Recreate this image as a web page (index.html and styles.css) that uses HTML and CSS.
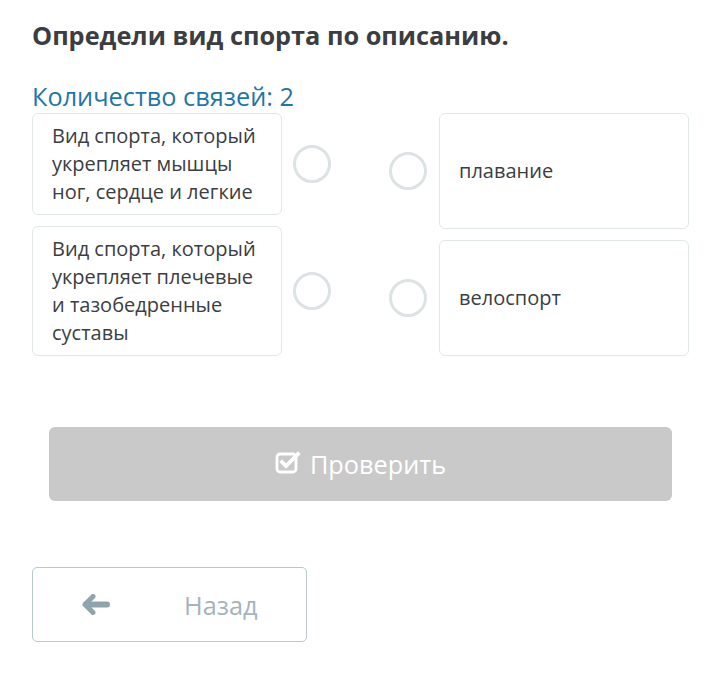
FILE: index.html
```html
<!DOCTYPE html>
<html lang="ru">
<head>
<meta charset="utf-8">
<link rel="stylesheet" href="styles.css">
</head>
<body>
<main class="page">
  <h1 class="title">Определи вид спорта по описанию.</h1>
  <div class="count">Количество связей: 2</div>
  <div class="pairs">
    <div class="col col-left">
      <div class="item">
        <div class="card">Вид спорта, который укрепляет мышцы ног, сердце и легкие</div>
        <span class="dot"></span>
      </div>
      <div class="item">
        <div class="card">Вид спорта, который укрепляет плечевые и тазобедренные суставы</div>
        <span class="dot"></span>
      </div>
    </div>
    <div class="col col-right">
      <div class="item">
        <span class="dot"></span>
        <div class="card card-answer">плавание</div>
      </div>
      <div class="item">
        <span class="dot"></span>
        <div class="card card-answer">велоспорт</div>
      </div>
    </div>
  </div>
  <button class="check" type="button">
    <svg class="check-icon" width="27" height="25" viewBox="0 0 27 25" aria-hidden="true">
      <rect x="2" y="5" width="19" height="18" rx="3" fill="none" stroke="#fff" stroke-width="2.8"/>
      <path d="M7 13 L11 17 L23 5" fill="none" stroke="#fff" stroke-width="3.8" stroke-linecap="square"/>
    </svg>
    <span>Проверить</span>
  </button>
  <button class="back" type="button">
    <svg class="back-icon" width="28" height="21" viewBox="0 0 28 21" aria-hidden="true">
      <path d="M11 2.5 L3 10.5 L11 18.5" fill="none" stroke="#8fa5ae" stroke-width="5" stroke-linecap="round" stroke-linejoin="round"/>
      <path d="M4 10.5 H25" fill="none" stroke="#8fa5ae" stroke-width="6" stroke-linecap="round"/>
    </svg>
    <span class="back-text">Назад</span>
  </button>
</main>
</body>
</html>
```
FILE: styles.css
```css
html, body {
  margin: 0;
  padding: 0;
  background: #fff;
}
body {
  font-family: "Open Sans", "Noto Sans", sans-serif;
  color: #3b3e42;
}
.page {
  width: 657px;
  margin-left: 32px;
  padding-top: 19px;
}
.title {
  margin: 0;
  font-size: 25.3px;
  font-weight: 700;
  line-height: 33px;
  color: #3a3d41;
}
.count {
  margin-top: 29px;
  font-size: 25.3px;
  line-height: 30px;
  color: #1f76a9;
}
.pairs {
  margin-top: 2px;
  display: flex;
  justify-content: space-between;
}
.col {
  display: flex;
  flex-direction: column;
  gap: 11px;
}
.col-right .item {
  flex: 1;
}
.item {
  display: flex;
  align-items: center;
}
.col-left .item {
  gap: 11px;
}
.col-right .item {
  gap: 12px;
  align-items: stretch;
}
.col-right .dot {
  align-self: center;
}
.card {
  box-sizing: border-box;
  width: 250px;
  padding: 8px 18px 8px 19px;
  border: 1px solid #e2e8ea;
  border-radius: 6px;
  font-size: 20px;
  line-height: 28px;
  color: #3b3e42;
}
.card-answer {
  display: flex;
  align-items: center;
}
.dot {
  box-sizing: border-box;
  width: 38px;
  height: 38px;
  border: 3px solid #dde2e4;
  border-radius: 50%;
  flex: none;
}
.check {
  display: flex;
  align-items: center;
  justify-content: center;
  gap: 8px;
  width: 623px;
  height: 74px;
  margin: 71px 0 0 17px;
  border: none;
  border-radius: 6px;
  background: #c9c9c9;
  color: #fff;
  font-family: "Open Sans", "Noto Sans", sans-serif;
  font-size: 25.3px;
  padding: 0;
}
.check-icon {
  margin-top: -5px;
}
.back {
  display: flex;
  align-items: center;
  width: 275px;
  height: 75px;
  margin-top: 66px;
  padding: 0 0 0 49px;
  border: 1px solid #b9c8cc;
  border-radius: 5px;
  background: #fff;
  font-family: "Open Sans", "Noto Sans", sans-serif;
  font-size: 25.3px;
  color: #a5b4b9;
}
.back-text {
  margin-left: 74px;
}
```
